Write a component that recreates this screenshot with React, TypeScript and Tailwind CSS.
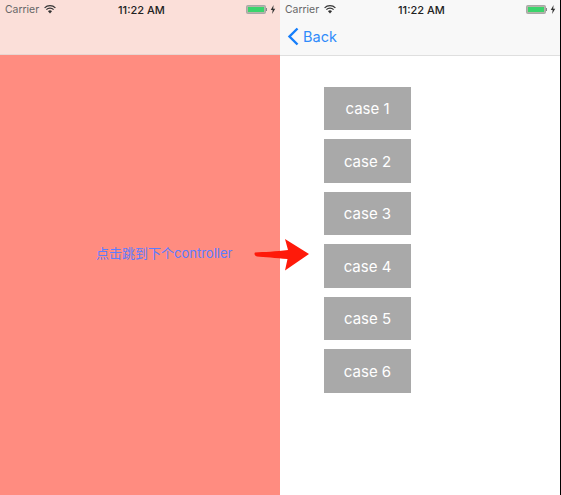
const font = "font-['Inter','Noto_Sans_CJK_SC',sans-serif]";

function Wifi() {
  return (
    <svg width="12" height="9" viewBox="0 0 12 9" className="ml-[5px]">
      <path d="M0.6 2.9 A7.6 7.6 0 0 1 11.4 2.9" fill="none" stroke="#333" strokeWidth="1.2" />
      <path d="M2.4 4.7 A5 5 0 0 1 9.6 4.7" fill="none" stroke="#333" strokeWidth="1.2" />
      <path d="M4 6.3 A2.6 2.6 0 0 1 8 6.3 L6 8.4 Z" fill="#333" />
    </svg>
  );
}

function Battery() {
  return (
    <div className="flex items-center">
      <div className="flex h-[9px] w-[20px] items-stretch rounded-[1.5px] border border-[#a8a8a8] bg-[#b5b5a8] p-[1px]">
        <div className="w-full bg-[#3ad46c]" />
      </div>
      <div className="h-[3px] w-[1px] bg-[#888]" />
      <svg width="6" height="9" viewBox="0 0 5 8" className="ml-[3px]">
        <path d="M3 0 L0.5 4.4 H2.2 L1.7 8 L4.5 3.4 H2.7 Z" fill="#333" />
      </svg>
    </div>
  );
}

function StatusBar() {
  return (
    <div className="relative flex h-[17px] items-center justify-between pl-[5px] pr-[4px] pt-[1px]">
      <div className="flex items-center text-[10.4px] leading-[12px] text-[#666]">
        <span className="pt-[1px]">Carrier</span>
        <Wifi />
      </div>
      <span className="absolute left-[118px] pt-[1px] text-[11px] font-medium leading-[12px] text-[#222]">11:22 AM</span>
      <Battery />
    </div>
  );
}

const cases = ["case 1", "case 2", "case 3", "case 4", "case 5", "case 6"];

export default function App() {
  return (
    <div className={`relative flex h-[495px] w-[561px] overflow-hidden bg-white ${font}`}>
      <div className="flex w-[280px] flex-col bg-[#ff8c80]">
        <div className="h-[55px] border-b border-[#e8d5d0] bg-[#fbdfd9]">
          <StatusBar />
        </div>
        <div className="pl-[96px] pt-[190px]">
          <span className="block text-[13px] leading-[16px] text-[#5b7dff]">点击跳到下个controller</span>
        </div>
      </div>
      <div className="flex w-[281px] flex-col border-r border-black bg-white">
        <div className="h-[56px] border-b border-[#dfdfdf] bg-[#f8f8f8]">
          <StatusBar />
          <div className="flex h-[38px] items-center pl-[7px] pt-[1px]">
            <svg width="12" height="19" viewBox="0 0 12 19">
              <path d="M10.5 1.5 L2.5 9.5 L10.5 17.5" fill="none" stroke="#157efb" strokeWidth="2.4" />
            </svg>
            <span className="ml-[4px] text-[14.5px] text-[#2f8bfb]">Back</span>
          </div>
        </div>
        <div className="flex flex-col gap-[9px] pl-[44px] pt-[30.5px]">
          {cases.map((c) => (
            <div
              key={c}
              className="flex h-[43.5px] w-[87px] items-center justify-center bg-[#a9a9a9] pt-[2px] text-[15px] text-white"
            >
              {c}
            </div>
          ))}
        </div>
      </div>
      <svg
        width="56"
        height="34"
        viewBox="0 0 56 34"
        className="absolute left-[254px] top-[238px]"
      >
        <path d="M1 14.5 C10 14 22 13.5 34 12 L31 1 L55 16 L31 32.5 L33.5 21 C22 20 10 19 3 18.5 C0.5 18 0 15.5 1 14.5 Z" fill="#ff1a0a" />
      </svg>
    </div>
  );
}
